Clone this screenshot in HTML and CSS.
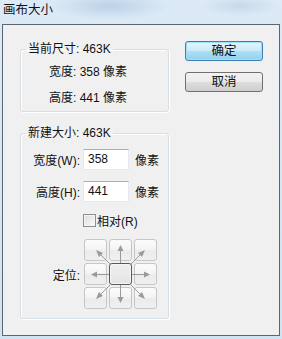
FILE: index.html
```html
<!DOCTYPE html>
<html lang="zh">
<head>
<meta charset="utf-8">
<title>画布大小</title>
<link rel="stylesheet" href="styles.css">
</head>
<body>
<div class="titlebar">画布大小</div>
<div class="dialog">
  <div class="left">
    <fieldset class="group group-current">
      <legend>当前尺寸: 463K</legend>
      <div class="info">
        <div class="info-row">宽度: 358 像素</div>
        <div class="info-row">高度: 441 像素</div>
      </div>
    </fieldset>
    <fieldset class="group group-new">
      <legend>新建大小: 463K</legend>
      <div class="field-row">
        <span class="label">宽度(W):</span>
        <span class="input">358</span>
        <span class="unit">像素</span>
      </div>
      <div class="field-row">
        <span class="label">高度(H):</span>
        <span class="input">441</span>
        <span class="unit">像素</span>
      </div>
      <div class="check-row">
        <span class="checkbox"></span>
        <span>相对(R)</span>
      </div>
      <div class="anchor-row">
        <span class="label">定位:</span>
        <div class="anchor">
          <div class="cell"></div><div class="cell"></div><div class="cell"></div>
          <div class="cell"></div><div class="cell center"></div><div class="cell"></div>
          <div class="cell"></div><div class="cell"></div><div class="cell"></div>
          <svg class="arrows" viewBox="0 0 73 70" width="73" height="70">
            <g stroke="#9a9a9a" stroke-width="1" fill="none">
              <line x1="36.5" y1="24" x2="36.5" y2="11"/>
              <line x1="36.5" y1="46" x2="36.5" y2="59"/>
              <line x1="25" y1="35.5" x2="12" y2="35.5"/>
              <line x1="48" y1="35.5" x2="61" y2="35.5"/>
              <line x1="26" y1="25" x2="16" y2="15"/>
              <line x1="47" y1="25" x2="57" y2="15"/>
              <line x1="26" y1="46" x2="16" y2="56"/>
              <line x1="47" y1="46" x2="57" y2="56"/>
            </g>
            <g fill="#9a9a9a">
              <polygon points="36.5,6 33.5,12 39.5,12"/>
              <polygon points="36.5,64 33.5,58 39.5,58"/>
              <polygon points="7,35.5 13,32.5 13,38.5"/>
              <polygon points="66,35.5 60,32.5 60,38.5"/>
              <polygon points="12,11 19,14 15,18"/>
              <polygon points="61,11 54,14 58,18"/>
              <polygon points="12,60 19,57 15,53"/>
              <polygon points="61,60 54,57 58,53"/>
            </g>
          </svg>
        </div>
      </div>
    </fieldset>
  </div>
  <div class="right">
    <div class="btn btn-default">确定</div>
    <div class="btn">取消</div>
  </div>
</div>
</body>
</html>
```
FILE: styles.css
```css
html, body {
  margin: 0;
  padding: 0;
}
body {
  width: 282px;
  height: 339px;
  overflow: hidden;
  font-family: "Liberation Sans", "Noto Sans CJK SC", sans-serif;
  font-size: 12px;
  color: #111;
  background:
    radial-gradient(ellipse 60px 14px at 110px 6px, rgba(150,180,210,0.45), rgba(150,180,210,0)),
    radial-gradient(ellipse 40px 10px at 240px 6px, rgba(160,185,210,0.35), rgba(160,185,210,0)),
    linear-gradient(180deg, #dceaf6 0%, #cfe3f3 100%);
}
.titlebar {
  height: 24px;
  line-height: 20px;
  padding-left: 3px;
  font-size: 12.5px;
}
.dialog {
  margin: 0 2px 0 2px;
  height: 310px;
  border: 1px solid #5b6670;
  background: #f0f0f0;
  display: flex;
  box-sizing: content-box;
}
.left {
  padding: 17px 0 0 17px;
  width: 149px;
}
.group {
  margin: 0;
  padding: 0;
  border: 1px solid #d5dfe5;
  border-radius: 3px;
  box-shadow: 1px 1px 0 #ffffff, inset 1px 1px 0 #ffffff;
  min-width: 0;
}
.group legend {
  margin-left: 5px;
  padding: 0 2px;
  line-height: 14px;
  height: 14px;
}
.info {
  padding: 9px 0 6px 28px;
}
.info-row {
  line-height: 14px;
  height: 14px;
}
.info-row + .info-row {
  margin-top: 12px;
}
.group-new {
  margin-top: 14px;
  padding: 9px 0 9px 0;
}
.field-row {
  display: flex;
  align-items: center;
  height: 21px;
}
.field-row + .field-row {
  margin-top: 11px;
}
.label {
  width: 59px;
  text-align: right;
  flex: none;
}
.input {
  margin-left: 3px;
  width: 46px;
  height: 21px;
  box-sizing: border-box;
  border: 1px solid #e3e9ef;
  border-top-color: #abadb3;
  background: #fff;
  padding-left: 4px;
  line-height: 19px;
}
.unit {
  margin-left: 6px;
}
.check-row {
  margin-top: 12px;
  padding-left: 62px;
  display: flex;
  align-items: center;
  height: 13px;
}
.checkbox {
  width: 13px;
  height: 13px;
  box-sizing: border-box;
  border: 1px solid #8e8f8f;
  background: linear-gradient(135deg, #dcdcdc, #fbfbfb);
  box-shadow: inset 0 0 0 1px #f4f4f4;
  margin-right: 1px;
}
.anchor-row {
  margin-top: 12px;
  display: flex;
  align-items: center;
}
.anchor {
  margin-left: 4px;
  position: relative;
  display: grid;
  grid-template-columns: repeat(3, 23px);
  grid-template-rows: repeat(3, 22px);
  gap: 2px;
}
.cell {
  box-sizing: border-box;
  border: 1px solid #c6c6c6;
  border-radius: 3px;
  background: linear-gradient(180deg, #fbfbfb 0%, #f5f5f5 45%, #ebebeb 55%, #f0f0f0 100%);
}
.cell.center {
  border-color: #5a5a5a;
  background: linear-gradient(180deg, #efefef, #e4e4e4);
  box-shadow: inset 0 0 0 1px #f6f6f6;
}
.arrows {
  position: absolute;
  left: 0;
  top: 0;
}
.right {
  margin-left: 16px;
  padding-top: 16px;
  display: flex;
  flex-direction: column;
}
.btn {
  width: 78px;
  height: 20px;
  box-sizing: border-box;
  border: 1px solid #707070;
  border-radius: 3px;
  background: linear-gradient(180deg, #f2f2f2 0%, #ebebeb 50%, #dddddd 51%, #cfcfcf 100%);
  text-align: center;
  line-height: 18px;
  font-size: 12.5px;
}
.btn + .btn {
  margin-top: 11px;
}
.btn-default {
  border-color: #3c7fb1;
  background: linear-gradient(180deg, #e5f4fc 0%, #c9eaf9 50%, #b0dff5 51%, #8fd0ef 100%);
  box-shadow: inset 0 0 0 1px #9fe0f8;
}
```
